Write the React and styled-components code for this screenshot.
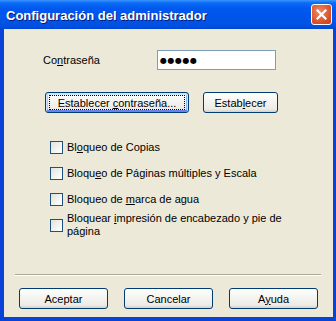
import React from "react";
import styled, { createGlobalStyle, css } from "styled-components";

const GlobalStyle = createGlobalStyle`
  html, body {
    margin: 0;
    padding: 0;
    background: #ffffff;
  }
  body {
    font-family: "Liberation Sans", Arial, sans-serif;
  }
`;

const Window = styled.div`
  width: 336px;
  height: 321px;
  box-sizing: border-box;
  display: flex;
  flex-direction: column;
  background: #0842d6;
  padding: 0 3px 4px 4px;
`;

const TitleBar = styled.div`
  height: 29px;
  margin: 0 -3px 0 -4px;
  padding: 0 4px 0 6px;
  display: flex;
  align-items: center;
  justify-content: space-between;
  background: linear-gradient(
    180deg,
    #3d95ff 0%,
    #0a6cf5 10%,
    #0058ee 30%,
    #0054e8 70%,
    #0050e0 90%,
    #0046d0 100%
  );
`;

const Title = styled.span`
  color: #ffffff;
  font: bold 13px "Liberation Sans", Arial, sans-serif;
  text-shadow: 1px 1px 0 #0a1a7a;
  margin-top: 1px;
`;

const CloseButton = styled.div`
  width: 21px;
  height: 21px;
  box-sizing: border-box;
  border: 1px solid #ffffff;
  border-radius: 3px;
  background: radial-gradient(circle at 40% 35%, #f08a6a 0%, #e0582f 55%, #c43c1c 100%);
  display: flex;
  align-items: center;
  justify-content: center;
`;

const Body = styled.div`
  flex: 1;
  background: #ece9d8;
  display: flex;
  flex-direction: column;
  font: 11px "Liberation Sans", Arial, sans-serif;
  color: #000000;
`;

const PasswordRow = styled.div`
  display: flex;
  align-items: center;
  margin: 21px 0 0 39px;
`;

const Label = styled.span`
  width: 114px;
`;

const PasswordInput = styled.div`
  width: 119px;
  height: 20px;
  box-sizing: border-box;
  border: 1px solid #7f9db9;
  background: #ffffff;
  display: flex;
  align-items: center;
  padding-left: 2px;
  font: 8px "DejaVu Sans", sans-serif;
  letter-spacing: 0.5px;
`;

const ButtonRow = styled.div`
  display: flex;
  gap: 14px;
  margin: 22px 0 0 41px;
`;

const Button = styled.button`
  width: ${(p) => p.$w}px;
  height: 21px;
  box-sizing: border-box;
  padding: 0;
  border: 1px solid #003c74;
  border-radius: 3px;
  background: linear-gradient(
    180deg,
    #ffffff 0%,
    #f6f6f3 35%,
    #ecebe6 85%,
    #d6d0c5 100%
  );
  font: 11px "Liberation Sans", Arial, sans-serif;
  color: #000000;
  display: flex;
  align-items: center;
  justify-content: center;
  ${(p) =>
    p.$default &&
    css`
      box-shadow: inset 0 1px 0 1px #cee7ff, inset 0 -1px 0 1px #6982ee,
        inset 1px 0 0 1px #b2cdf5, inset -1px 0 0 1px #8cb4f2;
    `}
`;

const FocusRect = styled.span`
  box-sizing: border-box;
  width: calc(100% - 6px);
  height: 15px;
  border: 1px dotted #000000;
  display: flex;
  align-items: center;
  justify-content: center;
`;

const CheckList = styled.div`
  display: flex;
  flex-direction: column;
  gap: 13px;
  margin: 28px 0 0 46px;
`;

const CheckRow = styled.label`
  display: flex;
  align-items: center;
  gap: 4px;
  line-height: 13px;
  ${(p) =>
    p.$wrap &&
    css`
      margin-top: -7px;
    `}
`;

const Box = styled.span`
  flex: none;
  width: 13px;
  height: 13px;
  box-sizing: border-box;
  border: 1px solid #1c5180;
  background: linear-gradient(135deg, #e2e1da 0%, #f4f4f1 60%, #ffffff 100%);
`;

const CheckText = styled.span`
  max-width: 222px;
`;

const Separator = styled.div`
  margin: 36px 12px 0 11px;
  border-top: 1px solid #aca899;
  border-bottom: 1px solid #ffffff;
`;

const Footer = styled.div`
  display: flex;
  gap: 16px;
  margin: 12px 0 0 15px;
`;

const checks = [
  { pre: "Bl", key: "o", post: ["queo de Copias"] },
  { pre: "Bloqu", key: "e", post: ["o de Páginas múltiples y Escala"] },
  { pre: "Bloqueo de ", key: "m", post: ["arca de agua"] },
  { pre: "Bloquear ", key: "i", post: ["mpresión de encabezado y pie de ", "página"], wrap: true },
];

export default function App() {
  return (
    <>
      <GlobalStyle />
      <Window>
        <TitleBar>
          <Title>Configuración del administrador</Title>
          <CloseButton>
            <svg width="11" height="11" viewBox="0 0 11 11">
              <path d="M1.5 1.5 L9.5 9.5 M9.5 1.5 L1.5 9.5" stroke="#ffffff" strokeWidth="2.2" strokeLinecap="square" />
            </svg>
          </CloseButton>
        </TitleBar>
        <Body>
          <PasswordRow>
            <Label>
              Co<u>n</u>traseña
            </Label>
            <PasswordInput>●●●●●</PasswordInput>
          </PasswordRow>
          <ButtonRow>
            <Button $w={144} $default>
              <FocusRect>
                <span>
                  Establecer <u>c</u>ontraseña...
                </span>
              </FocusRect>
            </Button>
            <Button $w={75}>
              <span>
                Estab<u>l</u>ecer
              </span>
            </Button>
          </ButtonRow>
          <CheckList>
            {checks.map((c) => (
              <CheckRow key={c.pre + c.key} $wrap={c.wrap}>
                <Box />
                <CheckText>
                  {c.pre}
                  <u>{c.key}</u>
                  {c.post.map((part) => (
                    <span key={part}>{part}</span>
                  ))}
                </CheckText>
              </CheckRow>
            ))}
          </CheckList>
          <Separator />
          <Footer>
            <Button $w={89}>Aceptar</Button>
            <Button $w={89}>Cancelar</Button>
            <Button $w={89}>
              <span>
                A<u>y</u>uda
              </span>
            </Button>
          </Footer>
        </Body>
      </Window>
    </>
  );
}
